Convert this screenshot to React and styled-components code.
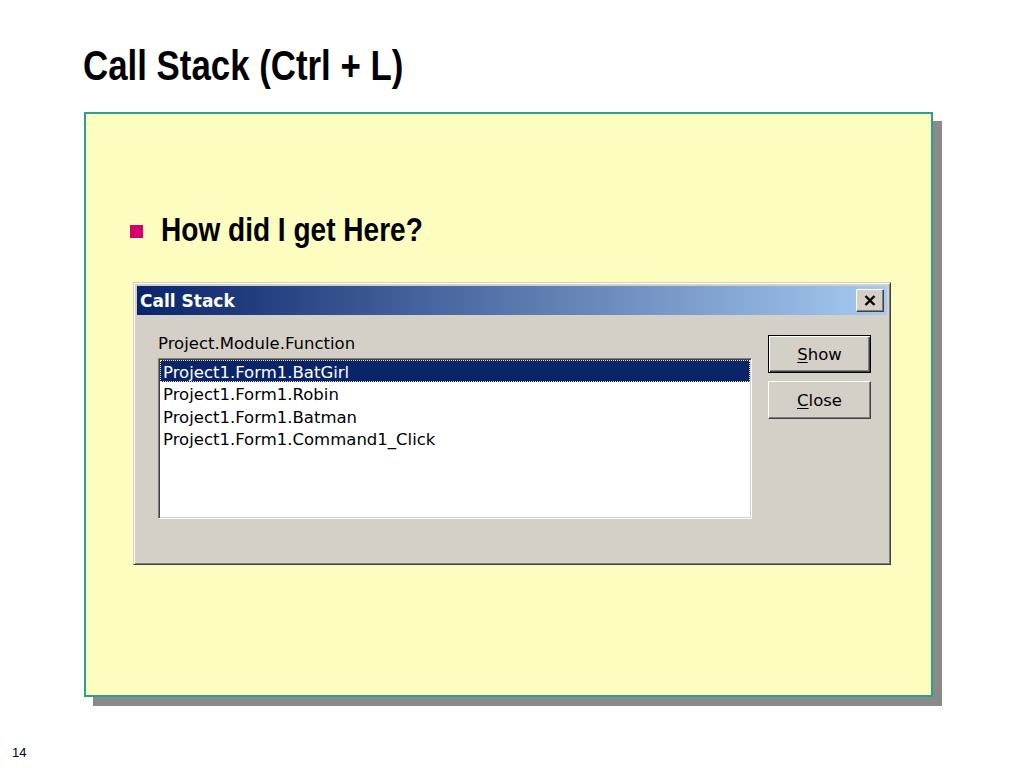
import styled, { createGlobalStyle } from "styled-components";

const Global = createGlobalStyle`
  html, body {
    margin: 0;
    padding: 0;
    background: #ffffff;
  }
`;

const Slide = styled.div`
  width: 1024px;
  height: 768px;
  background: #ffffff;
  overflow: hidden;
  font-family: "Liberation Sans Narrow", "Liberation Sans", Arial, sans-serif;
`;

// no narrow face installed, so squeeze the bold Arial metric font
const Narrow = styled.span`
  display: inline-block;
  white-space: nowrap;
  transform: scaleX(${(p) => p.scale});
  transform-origin: left center;
`;

const Heading = styled.h1`
  margin: 0;
  padding: 43px 0 0 83px;
  font-size: 43px;
  line-height: 44px;
  font-weight: 700;
  color: #000;
`;

const Panel = styled.div`
  box-sizing: border-box;
  width: 849px;
  height: 585px;
  margin: 25px 0 0 84px;
  padding: 97px 0 0 44px;
  background: #fdfdc0;
  border: 2px solid #2f9f8f;
  box-shadow: 9px 9px 0 #8a8a8a;
`;

const Bullet = styled.div`
  display: flex;
  align-items: center;
  gap: 18px;
  font-size: 33px;
  line-height: 38px;
  font-weight: 700;
  color: #000;

  &::before {
    content: "";
    flex: none;
    width: 13px;
    height: 13px;
    background: #d4006e;
    margin-top: 2px;
  }
`;

const Dialog = styled.div`
  box-sizing: border-box;
  width: 758px;
  height: 283px;
  margin: 33px 0 0 3px;
  padding: 3px;
  background: #d4d0c8;
  border: 1px solid;
  border-color: #d4d0c8 #404040 #404040 #d4d0c8;
  box-shadow: inset 1px 1px #ffffff, inset -1px -1px #808080;
  font-family: "DejaVu Sans", Verdana, sans-serif;
  font-size: 16.5px;
  color: #000;
`;

const TitleBar = styled.div`
  height: 29px;
  display: flex;
  align-items: center;
  justify-content: space-between;
  padding: 0 3px;
  background: linear-gradient(to right, #0a246a, #a6caf0);
  color: #fff;
  font-weight: 700;
  font-size: 17px;
`;

const CloseBox = styled.div`
  box-sizing: border-box;
  width: 28px;
  height: 23px;
  display: flex;
  align-items: center;
  justify-content: center;
  background: #d4d0c8;
  border: 1px solid;
  border-color: #ffffff #404040 #404040 #ffffff;
  box-shadow: inset -1px -1px #808080;
`;

const Body = styled.div`
  display: flex;
  gap: 16px;
  padding: 19px 16px 0 21px;
`;

const Column = styled.div`
  display: flex;
  flex-direction: column;
`;

const Label = styled.div`
  line-height: 20px;
  margin-bottom: 4px;
`;

const ListBox = styled.div`
  box-sizing: border-box;
  width: 594px;
  height: 161px;
  padding: 1px;
  background: #fff;
  border: 1px solid;
  border-color: #808080 #ffffff #ffffff #808080;
  box-shadow: inset 1px 1px #404040, inset -1px -1px #d4d0c8;
`;

const Row = styled.div`
  box-sizing: border-box;
  height: 22.4px;
  padding: 2px 0 0 2px;
  white-space: nowrap;
  border: 1px ${(p) => (p.selected ? "dotted #e8e6b0" : "solid transparent")};
  background: ${(p) => (p.selected ? "#0a246a" : "transparent")};
  color: ${(p) => (p.selected ? "#ffffff" : "#000000")};
  line-height: 19px;
`;

const Buttons = styled.div`
  display: flex;
  flex-direction: column;
  gap: 8px;
  margin-top: 1px;
`;

const Button = styled.div`
  box-sizing: border-box;
  width: 103px;
  height: 38px;
  display: flex;
  align-items: center;
  justify-content: center;
  background: #d4d0c8;
  border: 1px solid;
  border-color: ${(p) =>
    p.primary ? "#000000" : "#ffffff #404040 #404040 #ffffff"};
  box-shadow: ${(p) =>
    p.primary
      ? "inset 1px 1px #ffffff, inset -1px -1px #404040, inset -2px -2px #808080"
      : "inset -1px -1px #808080"};

  u {
    text-decoration: underline;
    text-underline-offset: 2px;
  }
`;

const PageNumber = styled.div`
  margin: 48px 0 0 12px;
  font-family: "Liberation Sans", Arial, sans-serif;
  font-size: 13px;
  line-height: 15px;
  color: #000;
`;

const rows = [
  "Project1.Form1.BatGirl",
  "Project1.Form1.Robin",
  "Project1.Form1.Batman",
  "Project1.Form1.Command1_Click",
];

const App = () => {
  return (
    <Slide>
      <Global />
      <Heading>
        <Narrow scale={0.81}>Call Stack (Ctrl + L)</Narrow>
      </Heading>
      <Panel>
        <Bullet>
          <Narrow scale={0.85}>How did I get Here?</Narrow>
        </Bullet>
        <Dialog>
          <TitleBar>
            <span>Call Stack</span>
            <CloseBox>
              <svg width="12" height="11" viewBox="0 0 12 11">
                <path
                  d="M1.5 1 L10.5 10 M10.5 1 L1.5 10"
                  stroke="#000"
                  strokeWidth="2.4"
                />
              </svg>
            </CloseBox>
          </TitleBar>
          <Body>
            <Column>
              <Label>Project.Module.Function</Label>
              <ListBox>
                {rows.map((r, i) => (
                  <Row key={r} selected={i === 0}>
                    {r}
                  </Row>
                ))}
              </ListBox>
            </Column>
            <Buttons>
              <Button primary>
                <span>
                  <u>S</u>how
                </span>
              </Button>
              <Button>
                <span>
                  <u>C</u>lose
                </span>
              </Button>
            </Buttons>
          </Body>
        </Dialog>
      </Panel>
      <PageNumber>14</PageNumber>
    </Slide>
  );
};

export default App;
